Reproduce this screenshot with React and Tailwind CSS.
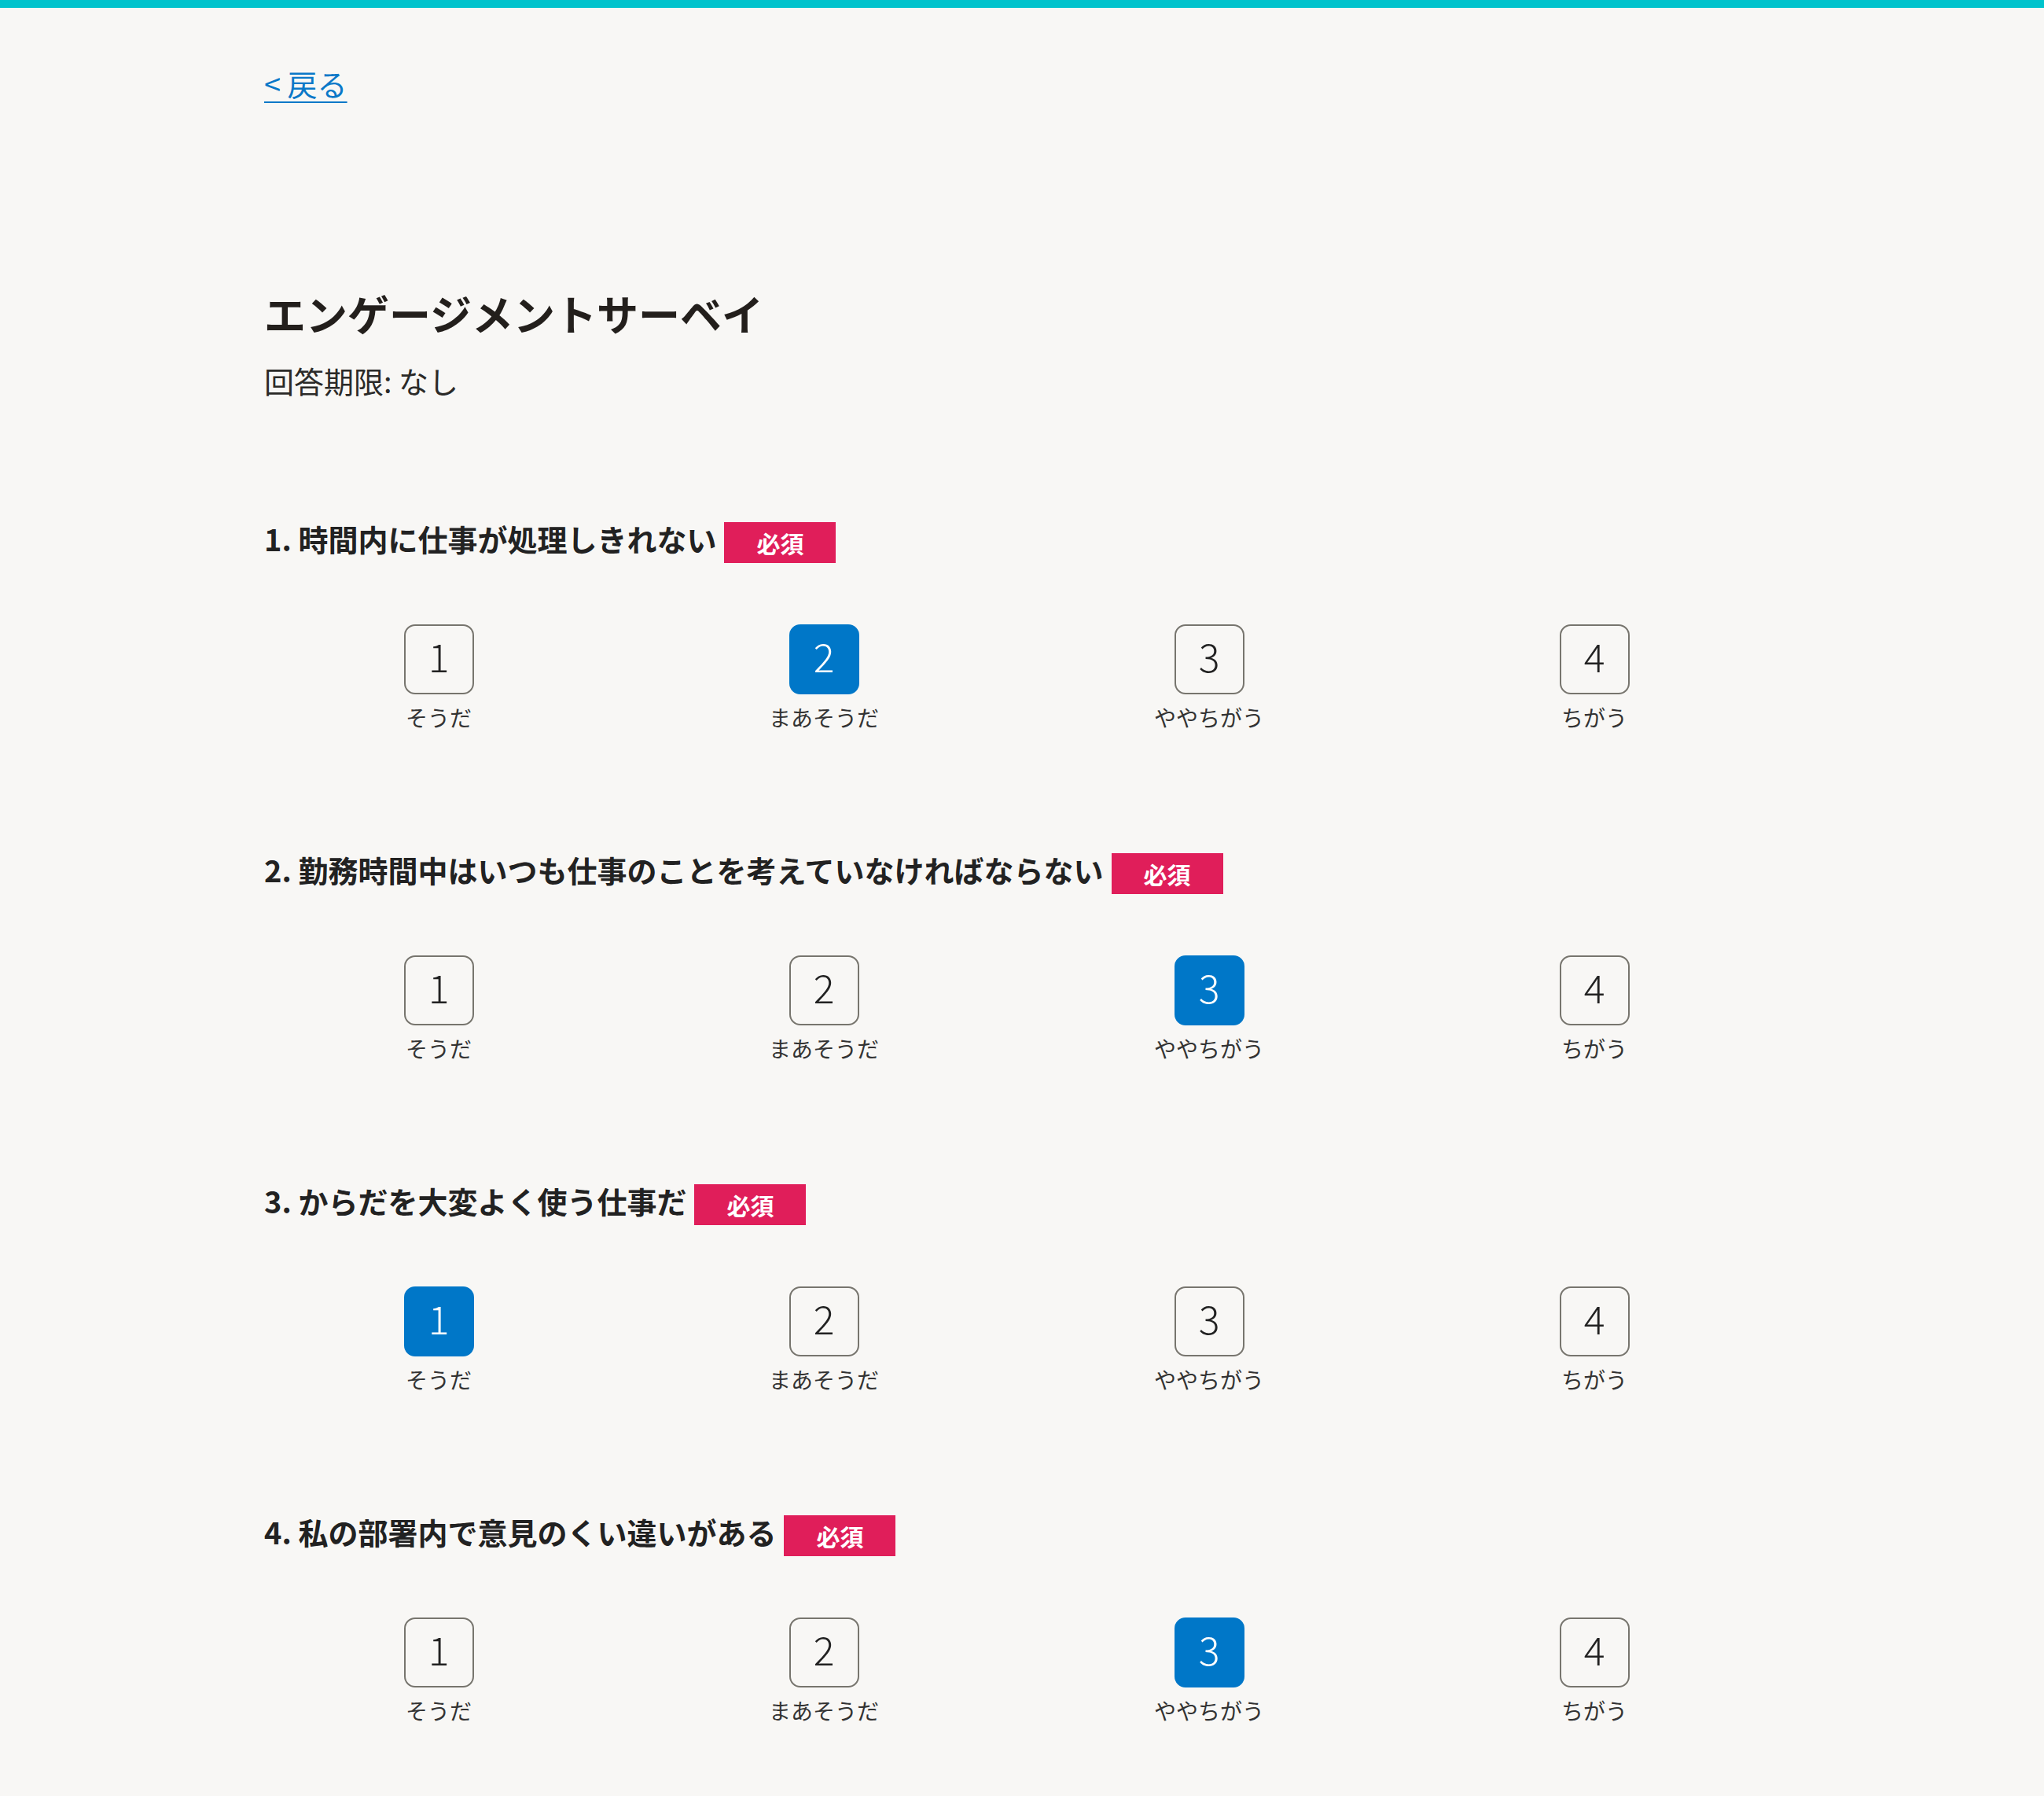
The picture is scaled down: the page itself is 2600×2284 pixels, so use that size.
import React, { useState } from "react";

const CHOICES = [
  { value: 1, label: "そうだ" },
  { value: 2, label: "まあそうだ" },
  { value: 3, label: "ややちがう" },
  { value: 4, label: "ちがう" },
];

const QUESTIONS = [
  { id: 1, text: "時間内に仕事が処理しきれない", answer: 2 },
  { id: 2, text: "勤務時間中はいつも仕事のことを考えていなければならない", answer: 3 },
  { id: 3, text: "からだを大変よく使う仕事だ", answer: 1 },
  { id: 4, text: "私の部署内で意見のくい違いがある", answer: 3 },
];

export default function App() {
  const [answers, setAnswers] = useState(() =>
    Object.fromEntries(QUESTIONS.map((q) => [q.id, q.answer]))
  );

  const pick = (id, v) => setAnswers((p) => ({ ...p, [id]: v }));

  return (
    <div className="min-h-screen bg-[#f8f7f5] text-[#222222] font-['Noto_Sans_CJK_JP','Noto_Sans',sans-serif]">
      {/* top accent */}
      <div className="h-[10px] bg-[#00c3cc]" />

      <div className="pr-[14px]">
        <div className="w-[1960px] mx-auto pt-[69px] pb-[80px]">
          <div className="px-[23px]">
            <a
              href="#"
              className="inline-block text-[38px] leading-[54px] text-[#0a78c8] underline decoration-2 underline-offset-[7px]"
            >
              &lt; 戻る
            </a>

            <h1 className="mt-[226px] text-[53px] leading-[78px] font-bold text-[#231f1c]">
              エンゲージメントサーベイ
            </h1>
            <p className="mt-[20px] text-[38px] leading-[54px] text-[#2b2a28]">回答期限: なし</p>
          </div>

          {QUESTIONS.map((q) => (
            <section key={q.id} className="mt-[153px]">
              <div className="px-[23px] flex items-center gap-[10px] h-[52px]">
                <h2 className="mb-[10px] text-[38px] leading-[52px] font-bold text-[#222222]">
                  {q.id}. {q.text}
                </h2>
                <span className="h-[52px] px-[41px] flex items-center bg-[#e01e5a] text-white text-[30px] font-bold leading-none">
                  必須
                </span>
              </div>

              <div className="mt-[78px] grid grid-cols-4">
                {CHOICES.map((c) => {
                  const on = answers[q.id] === c.value;
                  return (
                    <button
                      key={c.value}
                      type="button"
                      onClick={() => pick(q.id, c.value)}
                      className="flex flex-col items-center"
                    >
                      <span
                        className={`w-[89px] h-[89px] pb-[12px] rounded-[14px] border-2 flex items-center justify-center text-[50px] font-light leading-none ${
                          on
                            ? "bg-[#0077c8] border-[#0077c8] text-white"
                            : "bg-[#f8f7f5] border-[#77756e] text-[#222222]"
                        }`}
                      >
                        {c.value}
                      </span>
                      <span className="mt-[9px] text-[28px] leading-[40px] text-[#333333]">
                        {c.label}
                      </span>
                    </button>
                  );
                })}
              </div>
            </section>
          ))}
        </div>
      </div>
    </div>
  );
}
